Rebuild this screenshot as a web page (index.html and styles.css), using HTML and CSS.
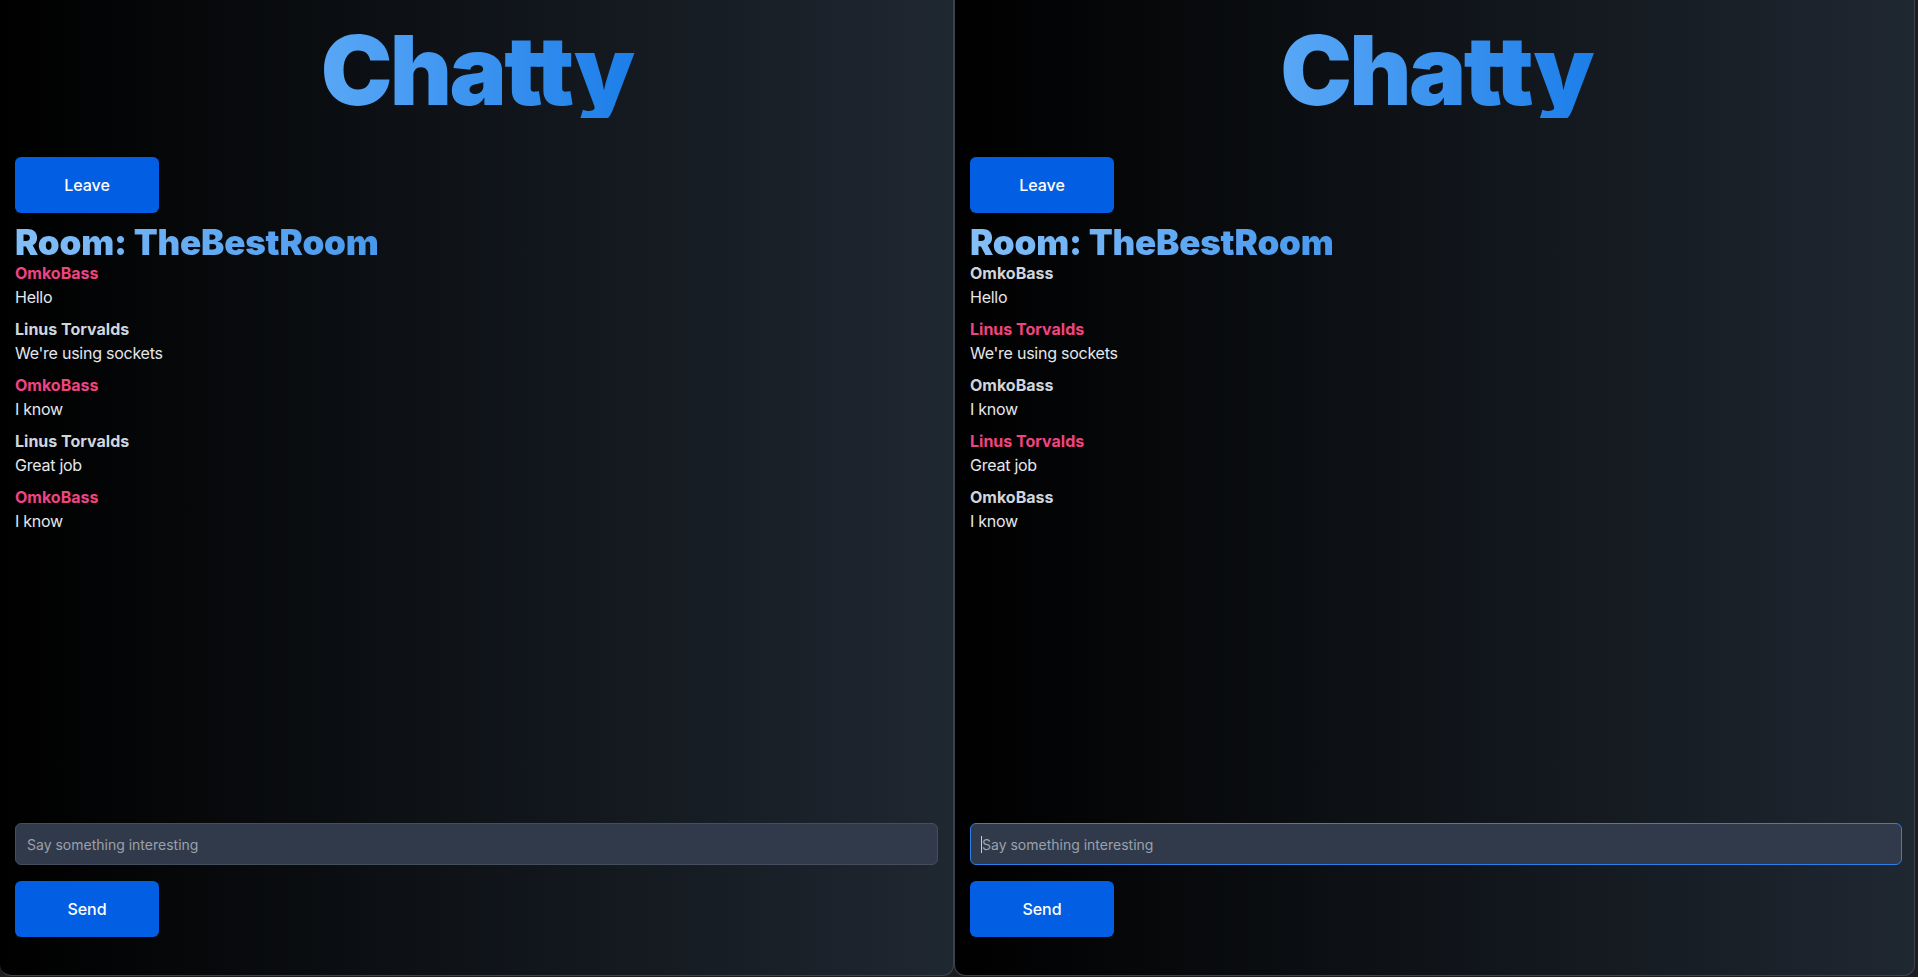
FILE: index.html
```html
<!DOCTYPE html>
<html lang="en">
<head>
<meta charset="utf-8">
<title>Chatty</title>
<link rel="stylesheet" href="styles.css">
</head>
<body>
<div class="desktop">
  <section class="window window-left">
    <h1 class="logo">Chatty</h1>
    <button class="btn">Leave</button>
    <h2 class="room">Room: TheBestRoom</h2>
    <div class="messages">
      <div class="msg"><div class="name me">OmkoBass</div><div class="text">Hello</div></div>
      <div class="msg"><div class="name">Linus Torvalds</div><div class="text">We're using sockets</div></div>
      <div class="msg"><div class="name me">OmkoBass</div><div class="text">I know</div></div>
      <div class="msg"><div class="name">Linus Torvalds</div><div class="text">Great job</div></div>
      <div class="msg"><div class="name me">OmkoBass</div><div class="text">I know</div></div>
    </div>
    <div class="field">
      <input class="input" type="text" placeholder="Say something interesting">
    </div>
    <button class="btn send">Send</button>
  </section>
  <section class="window window-right">
    <h1 class="logo">Chatty</h1>
    <button class="btn">Leave</button>
    <h2 class="room">Room: TheBestRoom</h2>
    <div class="messages">
      <div class="msg"><div class="name">OmkoBass</div><div class="text">Hello</div></div>
      <div class="msg"><div class="name me">Linus Torvalds</div><div class="text">We're using sockets</div></div>
      <div class="msg"><div class="name">OmkoBass</div><div class="text">I know</div></div>
      <div class="msg"><div class="name me">Linus Torvalds</div><div class="text">Great job</div></div>
      <div class="msg"><div class="name">OmkoBass</div><div class="text">I know</div></div>
    </div>
    <div class="field">
      <input class="input input-focused" type="text" placeholder="Say something interesting">
      <span class="caret"></span>
    </div>
    <button class="btn send">Send</button>
  </section>
</div>
</body>
</html>
```

FILE: styles.css
```css
* { box-sizing: border-box; }

html, body {
  margin: 0;
  padding: 0;
  width: 1918px;
  height: 977px;
  overflow: hidden;
  background: #1b1d21;
  font-family: Inter, "Liberation Sans", sans-serif;
}

.desktop {
  display: flex;
  height: 977px;
}

.window {
  display: flex;
  flex-direction: column;
  align-items: flex-start;
  height: 976px;
  background: linear-gradient(to right, #000000 0%, #1f2731 100%);
  border: 1px solid #3d4249;
  border-top: none;
  border-radius: 0 0 11px 11px;
  padding: 0 15px 38px 15px;
}

.window-left {
  width: 954px;
  border-left: none;
  padding-left: 15px;
  padding-right: 15px;
}

.window-right {
  width: 961px;
  padding-left: 15px;
  padding-right: 12px;
}

.logo {
  align-self: stretch;
  text-align: center;
  margin: 22px auto 0 auto;
  font-size: 96px;
  line-height: 96px;
  font-weight: 900;
  letter-spacing: -2.6px;
  background: linear-gradient(to right, #5aa8f6, #1c7ee9);
  -webkit-background-clip: text;
  background-clip: text;
  color: transparent;
  width: max-content;
  padding: 0 4px;
}

.btn {
  width: 144px;
  height: 56px;
  border: none;
  border-radius: 6px;
  background: #025ee2;
  color: #ffffff;
  font-family: Inter, "Liberation Sans", sans-serif;
  font-size: 16px;
  font-weight: 500;
  padding: 0;
  margin-top: 39px;
  cursor: pointer;
}

.room {
  margin: 11px 0 0 0;
  font-size: 35px;
  line-height: 36px;
  font-weight: 900;
  letter-spacing: -0.2px;
  background: linear-gradient(to right, #83bff8, #4798ee);
  -webkit-background-clip: text;
  background-clip: text;
  color: transparent;
}

.messages {
  flex: 1;
  display: flex;
  flex-direction: column;
  gap: 8px;
  margin-top: 1px;
}

.msg {
  font-size: 16px;
  line-height: 24px;
}

.name {
  font-weight: 700;
  color: #d1d5db;
}

.name.me {
  color: #ee4483;
}

.text {
  color: #e5e7eb;
  letter-spacing: -0.25px;
}

.field {
  position: relative;
  align-self: stretch;
}

.input {
  display: block;
  width: 100%;
  height: 42px;
  background: #313a4a;
  border: 1px solid #454e5d;
  border-radius: 6px;
  padding: 0 11px;
  color: #e5e7eb;
  font-family: Inter, "Liberation Sans", sans-serif;
  font-size: 14px;
  outline: none;
}

.input::placeholder {
  color: #9aa1ad;
}

.input-focused {
  border-color: #2b7fe9;
}

.caret {
  position: absolute;
  left: 11px;
  top: 13px;
  width: 1px;
  height: 17px;
  background: #c9ccd2;
}

.send {
  margin-top: 16px;
}
```
